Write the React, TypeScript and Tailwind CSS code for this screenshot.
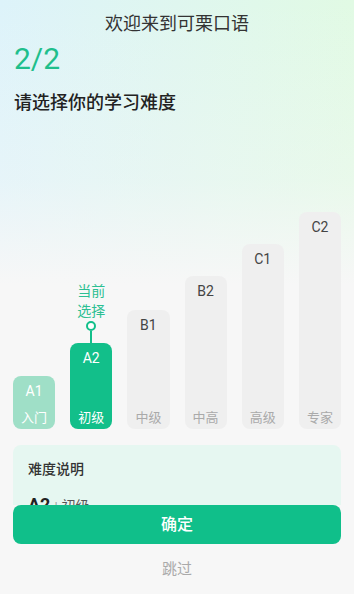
import React from 'react';

type Level = { code: string; name: string; height: number };

const levels: Level[] = [
  { code: 'A1', name: '入门', height: 53 },
  { code: 'A2', name: '初级', height: 86 },
  { code: 'B1', name: '中级', height: 119 },
  { code: 'B2', name: '中高', height: 153 },
  { code: 'C1', name: '高级', height: 185 },
  { code: 'C2', name: '专家', height: 217 },
];

const selected = 'A2';

const Bar: React.FC<{ level: Level; index: number }> = ({ level, index }) => {
  const isSelected = level.code === selected;
  const isPassed = index < levels.findIndex(l => l.code === selected);

  const barClass = isSelected
    ? 'bg-[#12bf8a] text-white'
    : isPassed
      ? 'bg-[#9fdfc7] text-white'
      : 'bg-[#efefef] text-[#444]';
  const subClass = isSelected || isPassed ? 'text-white' : 'text-[#aaa]';

  return (
    <div className="flex flex-col items-center">
      {isSelected && (
        <>
          <div className="text-[14px] leading-[20px] text-[#2cbf92] text-center">
            当前
            <br />
            选择
          </div>
          <div className="w-[10px] h-[10px] rounded-full border-2 border-[#12bf8a] bg-white" />
          <div className="w-[2px] h-[12px] bg-[#12bf8a]" />
        </>
      )}
      <div
        className={`w-full rounded-[8px] flex flex-col items-center justify-between pt-[5px] pb-[2px] ${barClass}`}
        style={{ height: level.height }}
      >
        <span className="text-[14px] leading-[20px]">{level.code}</span>
        <span className={`text-[13px] leading-[18px] ${subClass}`}>{level.name}</span>
      </div>
    </div>
  );
};

export default function App() {
  return (
    <div className="w-[354px] h-[594px] flex flex-col overflow-hidden font-['Roboto','Noto_Sans_CJK_SC',sans-serif] bg-[#f7f7f7] bg-[linear-gradient(to_bottom,rgba(247,247,247,0)_0%,rgba(247,247,247,0.35)_30%,#f7f7f7_48%),linear-gradient(to_right,#ddf3fa,#e1fae4)]">
      <div className="flex-1 overflow-hidden">
        <h1 className="pt-[13px] text-center text-[18px] leading-[22px] text-[#333]">欢迎来到可栗口语</h1>

        <div className="mt-[6px] px-[14px] text-[30px] leading-[36px] text-[#1fbf8c]">2/2</div>

        <h2 className="mt-[14px] px-[14px] text-[18px] leading-[24px] font-medium text-[#222]">请选择你的学习难度</h2>

        <div className="mt-[97px] px-[13px] grid grid-cols-6 gap-[15px] items-end">
          {levels.map((level, i) => (
            <Bar key={level.code} level={level} index={i} />
          ))}
        </div>

        <div className="mx-[13px] mt-[16px] rounded-[8px] bg-[#e6f7f1] px-[15px] pt-[14px] pb-[20px]">
          <div className="text-[14px] leading-[20px] font-medium text-[#333]">难度说明</div>
          <div className="mt-[15px] flex items-baseline gap-[4px]">
            <span className="text-[18px] leading-[22px] font-bold text-[#222]">A2</span>
            <span className="text-[13px] text-[#999]">|</span>
            <span className="text-[14px] text-[#555]">初级</span>
          </div>
          <p className="mt-[8px] text-[13px] leading-[20px] text-[#666]">
            能理解并使用日常生活中常见的句子和表达，可以就熟悉的话题进行简单交流。
          </p>
        </div>
      </div>

      <div className="px-[13px]">
        <button className="w-full h-[39px] rounded-[8px] bg-[#10bf8a] text-white text-[16px] font-medium">确定</button>
      </div>
      <div className="h-[50px] flex items-center justify-center text-[15px] text-[#aaa]">跳过</div>
    </div>
  );
}
